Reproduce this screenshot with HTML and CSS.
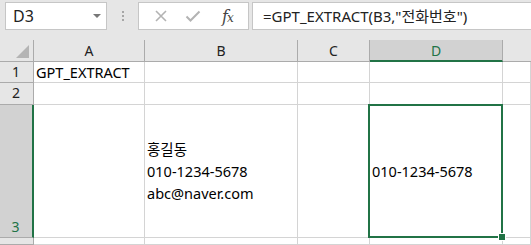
FILE: index.html
```html
<!DOCTYPE html>
<html lang="ko">
<head>
  <meta charset="UTF-8">
  <title>GPT_EXTRACT</title>
  <link rel="stylesheet" href="styles.css">
</head>
<body>
  <div class="toolbar">
    <div class="namebox">
      <span class="ref">D3</span>
      <span class="arrow"></span>
    </div>
    <div class="dots">
      <i></i><i></i><i></i>
    </div>
    <div class="btns">
      <svg class="ico" width="14" height="14" viewBox="0 0 14 14">
        <path d="M2 2 L12 12 M12 2 L2 12" stroke="#b3b3b3" stroke-width="1.6" fill="none"/>
      </svg>
      <svg class="ico" width="16" height="14" viewBox="0 0 16 14">
        <path d="M1.5 7.5 L5.5 11.5 L14.5 2.5" stroke="#b3b3b3" stroke-width="2" fill="none"/>
      </svg>
      <span class="fx">f<small>x</small></span>
    </div>
    <div class="formula">=GPT_EXTRACT(B3,"전화번호")</div>
  </div>

  <div class="sheet">
    <div class="hd corner"><span class="tri"></span></div>
    <div class="hd col">A</div>
    <div class="hd col">B</div>
    <div class="hd col">C</div>
    <div class="hd col sel">D</div>
    <div class="hd col last"></div>

    <div class="hd row">1</div>
    <div class="cell">GPT_EXTRACT</div>
    <div class="cell"></div>
    <div class="cell"></div>
    <div class="cell"></div>
    <div class="cell"></div>

    <div class="hd row">2</div>
    <div class="cell"></div>
    <div class="cell"></div>
    <div class="cell"></div>
    <div class="cell"></div>
    <div class="cell"></div>

    <div class="hd row sel big">3</div>
    <div class="cell"></div>
    <div class="cell wrap">홍길동<br>010-1234-5678<br>abc@naver.com</div>
    <div class="cell"></div>
    <div class="cell mid active">010-1234-5678<span class="box"><span class="handle"></span></span></div>
    <div class="cell"></div>

    <div class="hd row"></div>
    <div class="cell"></div>
    <div class="cell"></div>
    <div class="cell"></div>
    <div class="cell"></div>
    <div class="cell"></div>
  </div>
</body>
</html>
```

FILE: styles.css
```css
body {
  margin: 0;
  background: #e6e6e6;
  font-family: "Noto Sans", "Noto Sans CJK KR", sans-serif;
  color: #000;
  overflow: hidden;
}
.toolbar {
  height: 40px;
  display: flex;
  align-items: flex-start;
  padding-top: 2px;
  box-sizing: border-box;
}
.namebox {
  margin-left: 5px;
  width: 102px;
  height: 28px;
  box-sizing: border-box;
  background: #fff;
  border: 1px solid #c6c6c6;
  display: flex;
  align-items: center;
  justify-content: space-between;
  padding: 0 5px 0 7px;
}
.ref {
  font-size: 16px;
  color: #222;
}
.arrow {
  width: 0;
  height: 0;
  border-left: 4px solid transparent;
  border-right: 4px solid transparent;
  border-top: 4px solid #777;
}
.dots {
  width: 31px;
  height: 28px;
  display: flex;
  flex-direction: column;
  align-items: center;
  justify-content: center;
  gap: 2px;
}
.dots i {
  width: 2px;
  height: 2px;
  background: #a6a6a6;
}
.btns {
  width: 111px;
  height: 28px;
  box-sizing: border-box;
  background: #fff;
  border: 1px solid #c6c6c6;
  display: flex;
  align-items: center;
  padding: 0 10px 0 15px;
  gap: 17px;
}
.fx {
  font-family: "DejaVu Serif", serif;
  font-style: italic;
  font-size: 16px;
  color: #444;
  margin-left: 4px;
  letter-spacing: -1px;
}
.fx small {
  font-size: 12px;
}
.formula {
  margin-left: 3px;
  flex: 1;
  height: 28px;
  box-sizing: border-box;
  background: #fff;
  border: 1px solid #c6c6c6;
  border-right: none;
  padding-left: 10px;
  font-size: 15px;
  line-height: 26px;
  color: #222;
  white-space: nowrap;
}
.sheet {
  display: grid;
  grid-template-columns: 34px 111px 153px 72px 133px 1fr;
  grid-template-rows: 22px 21px 22px 133px 7px;
  background: #fff;
}
.hd {
  background: #e6e6e6;
  border-right: 1px solid #ababab;
  border-bottom: 1px solid #ababab;
  box-sizing: border-box;
  font-size: 14px;
  color: #222;
}
.col {
  text-align: center;
  line-height: 21px;
}
.col.last {
  border-right: none;
}
.hd.sel {
  background: #d2d2d2;
  color: #217346;
}
.col.sel {
  border-bottom: 2px solid #217346;
}
.row {
  text-align: center;
  line-height: 20px;
  padding-right: 1px;
}
.row.big {
  display: flex;
  align-items: flex-end;
  justify-content: center;
  border-right: 2px solid #217346;
}
.corner {
  position: relative;
}
.tri {
  position: absolute;
  right: 4px;
  bottom: 3px;
  width: 0;
  height: 0;
  border-left: 13px solid transparent;
  border-bottom: 13px solid #b4b4b4;
}
.cell {
  border-right: 1px solid #d4d4d4;
  border-bottom: 1px solid #d4d4d4;
  box-sizing: border-box;
  font-size: 14.5px;
  line-height: 20px;
  padding-left: 2px;
  white-space: nowrap;
  position: relative;
}
.wrap {
  display: flex;
  align-items: center;
  line-height: 22px;
}
.mid {
  display: flex;
  align-items: center;
}
.active {
  z-index: 2;
}
.box {
  position: absolute;
  left: -2px;
  top: -1px;
  right: -1px;
  bottom: -1px;
  border: 2px solid #217346;
}
.handle {
  position: absolute;
  right: -5px;
  bottom: -5px;
  width: 6px;
  height: 6px;
  background: #217346;
  border: 1px solid #fff;
}
```
